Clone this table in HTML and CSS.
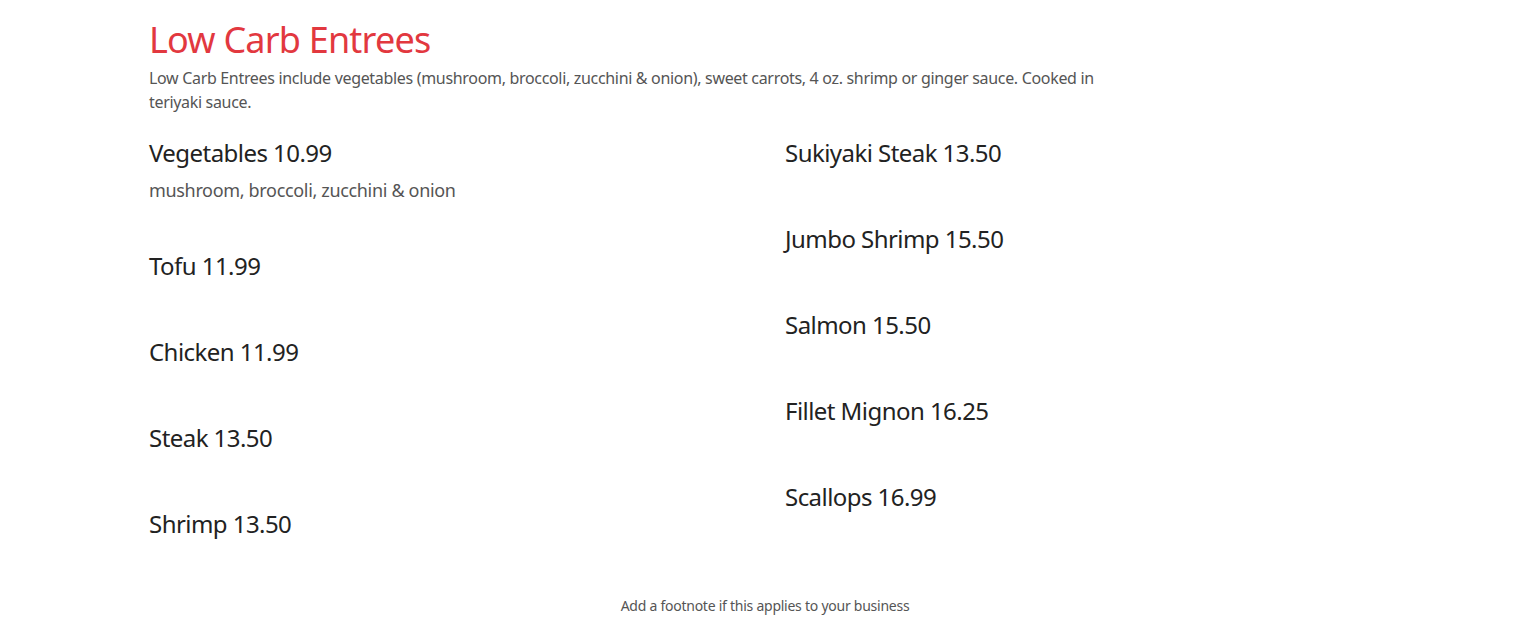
FILE: index.html
```html
<!DOCTYPE html>
<html lang="en">
<head>
<meta charset="utf-8">
<title>Low Carb Entrees</title>
<link rel="stylesheet" href="styles.css">
</head>
<body>
<main class="menu">
  <h1 class="menu-title">Low Carb Entrees</h1>
  <p class="menu-desc">Low Carb Entrees include vegetables (mushroom, broccoli, zucchini &amp; onion), sweet carrots, 4 oz. shrimp or ginger sauce. Cooked in teriyaki sauce.</p>
  <div class="menu-grid">
    <div class="menu-col">
      <div class="item">
        <h2 class="item-name">Vegetables 10.99</h2>
        <p class="item-desc">mushroom, broccoli, zucchini &amp; onion</p>
      </div>
      <div class="item"><h2 class="item-name">Tofu 11.99</h2></div>
      <div class="item"><h2 class="item-name">Chicken 11.99</h2></div>
      <div class="item"><h2 class="item-name">Steak 13.50</h2></div>
      <div class="item"><h2 class="item-name">Shrimp 13.50</h2></div>
    </div>
    <div class="menu-col">
      <div class="item"><h2 class="item-name">Sukiyaki Steak 13.50</h2></div>
      <div class="item"><h2 class="item-name">Jumbo Shrimp 15.50</h2></div>
      <div class="item"><h2 class="item-name">Salmon 15.50</h2></div>
      <div class="item"><h2 class="item-name">Fillet Mignon 16.25</h2></div>
      <div class="item"><h2 class="item-name">Scallops 16.99</h2></div>
    </div>
  </div>
  <p class="footnote">Add a footnote if this applies to your business</p>
</main>
</body>
</html>
```

FILE: styles.css
```css
html, body {
  margin: 0;
  padding: 0;
  background: #ffffff;
}

body {
  font-family: "Noto Sans", "Open Sans", "DejaVu Sans", sans-serif;
  color: #222222;
}

.menu {
  width: 1232px;
  margin: 0 auto;
  padding-top: 18px;
}

.menu-title {
  margin: 0;
  font-size: 36px;
  line-height: 44px;
  font-weight: 400;
  letter-spacing: -0.8px;
  color: #e2383f;
}

.menu-desc {
  margin: 4px 0 0;
  max-width: 960px;
  font-size: 16px;
  line-height: 24px;
  letter-spacing: -0.32px;
  color: #555555;
}

.menu-grid {
  display: grid;
  grid-template-columns: 1fr 1fr;
  column-gap: 40px;
  margin-top: 23px;
}

.item {
  margin-bottom: 54px;
}

.item-name {
  margin: 0;
  font-size: 24px;
  line-height: 32px;
  font-weight: 400;
  letter-spacing: -0.55px;
  color: #222222;
}

.item-desc {
  margin: 9px 0 -6px;
  font-size: 18px;
  line-height: 24px;
  letter-spacing: -0.33px;
  color: #555555;
}

.footnote {
  margin: 2px 0 0;
  text-align: center;
  font-size: 14px;
  line-height: 20px;
  letter-spacing: -0.25px;
  color: #555555;
}
```
